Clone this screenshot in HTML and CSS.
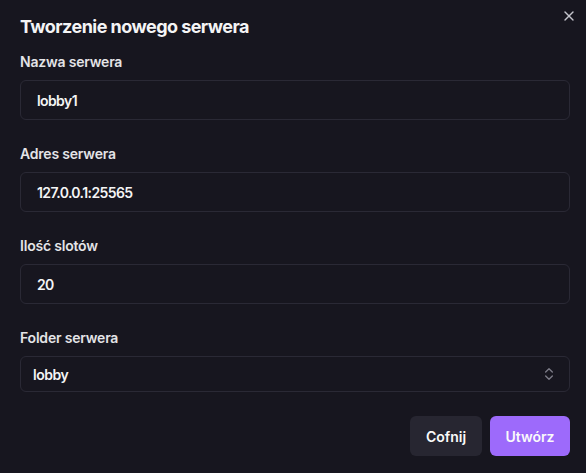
FILE: index.html
```html
<!DOCTYPE html>
<html lang="pl">
<head>
<meta charset="utf-8">
<link rel="stylesheet" href="styles.css">
</head>
<body>
<div class="dialog">
  <button class="close" aria-label="Zamknij">
    <svg width="16" height="16" viewBox="0 0 24 24" fill="none" stroke="currentColor" stroke-width="2" stroke-linecap="round" stroke-linejoin="round"><path d="M18 6 6 18"/><path d="m6 6 12 12"/></svg>
  </button>
  <h2 class="title">Tworzenie nowego serwera</h2>
  <div class="fields">
    <div class="field">
      <label class="label">Nazwa serwera</label>
      <input class="input" type="text" value="lobby1">
    </div>
    <div class="field">
      <label class="label">Adres serwera</label>
      <input class="input" type="text" value="127.0.0.1:25565">
    </div>
    <div class="field">
      <label class="label">Ilość slotów</label>
      <input class="input" type="text" value="20">
    </div>
    <div class="field">
      <label class="label">Folder serwera</label>
      <div class="select">
        <span>lobby</span>
        <svg width="16" height="16" viewBox="0 0 24 24" fill="none" stroke="currentColor" stroke-width="2" stroke-linecap="round" stroke-linejoin="round"><path d="m7 15 5 5 5-5"/><path d="m7 9 5-5 5 5"/></svg>
      </div>
    </div>
  </div>
  <div class="actions">
    <button class="btn btn-secondary">Cofnij</button>
    <button class="btn btn-primary">Utwórz</button>
  </div>
</div>
</body>
</html>
```
FILE: styles.css
```css
* { box-sizing: border-box; }
html, body {
  margin: 0;
  padding: 0;
  background: #17161f;
  height: 100%;
}
body {
  font-family: "Inter", "Noto Sans", sans-serif;
  color: #f4f4f5;
}
.dialog {
  position: relative;
  padding: 13px 16px 17px 20px;
  height: 473px;
}
.close {
  position: absolute;
  top: 8px;
  right: 9px;
  width: 16px;
  height: 16px;
  padding: 0;
  border: 0;
  background: none;
  color: #c4c4cc;
  display: flex;
}
.title {
  margin: 0;
  font-size: 18px;
  line-height: 28px;
  font-weight: 700;
  letter-spacing: -0.55px;
  color: #f4f4f5;
}
.fields {
  margin-top: 11px;
  display: flex;
  flex-direction: column;
  gap: 24px;
}
.field {
  display: flex;
  flex-direction: column;
  gap: 8px;
}
.label {
  font-size: 14px;
  line-height: 20px;
  font-weight: 600;
  letter-spacing: -0.2px;
  color: #e4e4e7;
}
.input {
  height: 40px;
  width: 100%;
  border: 1px solid #2a2935;
  border-radius: 6px;
  background: transparent;
  padding: 0 16px;
  font: inherit;
  font-size: 14px;
  font-weight: 600;
  letter-spacing: -0.6px;
  color: #f4f4f5;
  outline: none;
}
.select {
  height: 36px;
  border: 1px solid #2a2935;
  border-radius: 6px;
  padding: 0 12px;
  display: flex;
  align-items: center;
  justify-content: space-between;
  font-size: 14px;
  font-weight: 600;
  letter-spacing: -0.5px;
  color: #f4f4f5;
}
.select svg { color: #7d7c88; }
.actions {
  margin-top: 24px;
  display: flex;
  justify-content: flex-end;
  gap: 8px;
}
.btn {
  height: 40px;
  width: 72px;
  padding: 0;
  border: 0;
  border-radius: 6px;
  font-family: inherit;
  font-size: 14px;
  font-weight: 600;
  color: #fafafa;
}
.btn-primary { width: 80px; }
.btn-secondary { background: #272631; }
.btn-primary { background: #9d6afb; }
```
